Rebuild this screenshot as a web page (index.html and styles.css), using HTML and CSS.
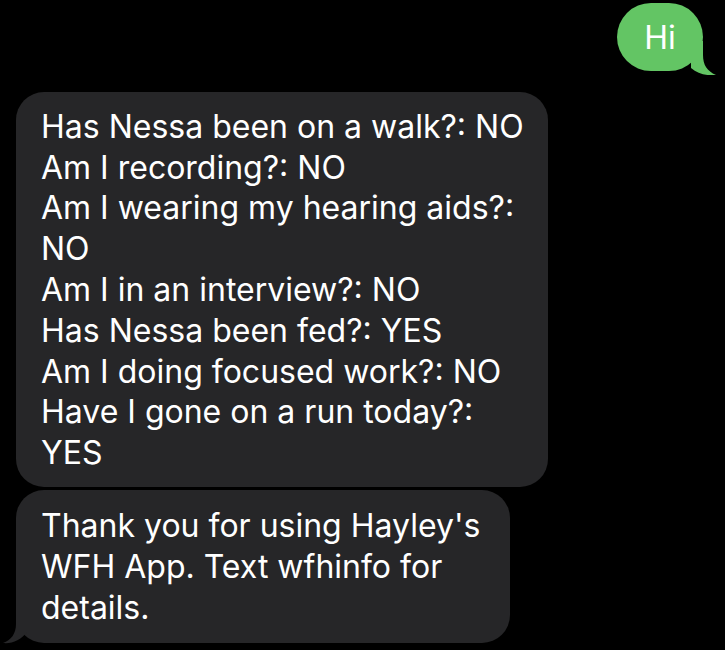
FILE: index.html
```html
<!DOCTYPE html>
<html>
<head>
<meta charset="utf-8">
<link rel="stylesheet" href="styles.css">
</head>
<body>
<div class="thread">
  <div class="row row-out">
    <div class="bubble bubble-out">
      <span class="line">Hi</span>
      <svg class="tail tail-out" width="30" height="34" viewBox="0 0 30 34"><path d="M16 0 L16 14 C16 24 20 30 29 34 C20 35 11 33 4 27 L4 0 Z" fill="#63c564"/></svg>
    </div>
  </div>
  <div class="row row-in">
    <div class="bubble bubble-in bubble-wide">
      <span class="line">Has Nessa been on a walk?: NO</span>
      <span class="line">Am I recording?: NO</span>
      <span class="line">Am I wearing my hearing aids?:</span>
      <span class="line">NO</span>
      <span class="line">Am I in an interview?: NO</span>
      <span class="line">Has Nessa been fed?: YES</span>
      <span class="line">Am I doing focused work?: NO</span>
      <span class="line">Have I gone on a run today?:</span>
      <span class="line">YES</span>
    </div>
  </div>
  <div class="row row-in">
    <div class="bubble bubble-in bubble-mid">
      <span class="line">Thank you for using Hayley's</span>
      <span class="line">WFH App. Text wfhinfo for</span>
      <span class="line">details.</span>
      <svg class="tail tail-in" width="30" height="32" viewBox="0 0 30 32"><path d="M14 0 L14 12 C14 22 9 28 1 31 C10 32 19 28 25 20 L25 0 Z" fill="#262628"/></svg>
    </div>
  </div>
</div>
</body>
</html>
```

FILE: styles.css
```css
html, body {
  margin: 0;
  padding: 0;
  background: #000;
}
.thread {
  width: 725px;
  height: 650px;
  display: flex;
  flex-direction: column;
  padding-top: 3px;
  box-sizing: border-box;
  font-family: "Inter", "Liberation Sans", sans-serif;
  font-size: 32px;
  line-height: 40.8px;
  color: #fff;
}
.row {
  display: flex;
}
.row-out {
  justify-content: flex-end;
  padding-right: 22px;
}
.row-in {
  justify-content: flex-start;
  padding-left: 16px;
}
.bubble {
  position: relative;
  box-sizing: border-box;
  border-radius: 28px;
}
.line {
  display: block;
  white-space: nowrap;
  position: relative;
  z-index: 1;
}
.bubble-out {
  background: #63c564;
  padding: 15px 0 12px 0;
  width: 86px;
  text-align: center;
  border-radius: 34px;
}
.bubble-in {
  background: #262628;
  padding: 15px 25px 13px 25px;
  margin-top: 21px;
}
.bubble-wide {
  width: 532px;
}
.bubble-mid {
  width: 494px;
  margin-top: 3px;
  padding-top: 16px;
  padding-bottom: 15px;
}
.tail {
  position: absolute;
  display: block;
}
.tail-out {
  right: -14px;
  bottom: -4px;
}
.tail-in {
  left: -14px;
  bottom: -1px;
}
```
